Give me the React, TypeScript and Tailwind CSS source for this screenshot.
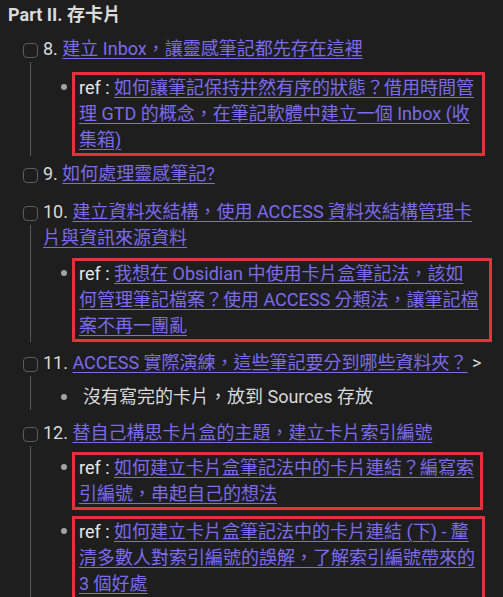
import React from "react";

type Task = {
  num: string;
  link: React.ReactNode;
  tail?: string;
  mt: string;
  childMt?: string;
  children?: React.ReactNode;
};

function Link({ children }: { children: React.ReactNode }) {
  return <a className="text-[#7c6bec] underline decoration-1 underline-offset-[3px] cursor-pointer">{children}</a>;
}

function RefBox({ width, mt, children }: { width: string; mt?: string; children: React.ReactNode }) {
  return (
    <div className={`flex ${mt ?? ""}`}>
      <span className="mt-[12px] h-[6px] w-[6px] flex-none rounded-full bg-[#a3a3a3]" />
      <div className={`ml-[5px] border-[3px] border-[#e5313b] pl-[4px] whitespace-nowrap ${width}`}>
        <span className="text-[#e8e8e8]">ref : </span>
        <Link>{children}</Link>
      </div>
    </div>
  );
}

function TaskItem({ num, link, tail, mt, childMt, children }: Task) {
  const hasKids = children !== undefined;
  return (
    <div className={`grid grid-cols-[15px_1fr] gap-x-[5px] ${mt}`}>
      {/* checkbox + guide line */}
      <div className="flex flex-col items-center">
        <div className="mt-[7px] h-[15px] w-[15px] shrink-0 rounded-[4px] border border-[#5c5c5c]" />
        {hasKids ? <div className="mt-[4px] w-[1px] grow bg-[#585858]" /> : null}
      </div>
      <div>
        <div className="whitespace-nowrap">
          {num} <Link>{link}</Link>
          {tail}
        </div>
        {hasKids ? <div className={`pl-[18px] ${childMt ?? ""}`}>{children}</div> : null}
      </div>
    </div>
  );
}

export default function App() {
  return (
    <div className="min-h-screen bg-[#1e1e1e] text-[18px] leading-[26px] text-[#dadada] font-['Roboto','Noto_Sans_CJK_TC',sans-serif]">
      <h1 className="pl-[8px] text-[18px] font-bold leading-[30px] text-[#dadada]">Part II. 存卡片</h1>

      <div className="pl-[23px]">
        <TaskItem num="8." link="建立 Inbox，讓靈感筆記都先存在這裡" mt="mt-[6px]" childMt="mt-[10px]">
          <RefBox width="w-[413px]">
            如何讓筆記保持井然有序的狀態？借用時間管
            <br />
            理 GTD 的概念，在筆記軟體中建立一個 Inbox (收
            <br />
            集箱)
          </RefBox>
        </TaskItem>

        <TaskItem num="9." link="如何處理靈感筆記?" mt="mt-[5px]" />

        <TaskItem
          num="10."
          link={
            <>
              建立資料夾結構，使用 ACCESS 資料夾結構管理卡
              <br />
              片與資訊來源資料
            </>
          }
          mt="mt-[12px]"
          childMt="mt-[7px]"
        >
          <RefBox width="w-[420px]">
            我想在 Obsidian 中使用卡片盒筆記法，該如
            <br />
            何管理筆記檔案？使用 ACCESS 分類法，讓筆記檔
            <br />
            案不再一團亂
          </RefBox>
        </TaskItem>

        <TaskItem
          num="11."
          link="ACCESS 實際演練，這些筆記要分到哪些資料夾？"
          tail=" >"
          mt="mt-[8px]"
          childMt="mt-[8px]"
        >
          <div className="flex">
            <span className="mt-[10px] h-[6px] w-[6px] flex-none rounded-full bg-[#a3a3a3]" />
            <span className="ml-[16px] whitespace-nowrap">沒有寫完的卡片，放到 Sources 存放</span>
          </div>
        </TaskItem>

        <TaskItem num="12." link="替自己構思卡片盒的主題，建立卡片索引編號" mt="mt-[10px]" childMt="mt-[6px]">
          <RefBox width="w-[411px]">
            如何建立卡片盒筆記法中的卡片連結？編寫索
            <br />
            引編號，串起自己的想法
          </RefBox>
          <RefBox width="w-[413px]" mt="mt-[6px]">
            如何建立卡片盒筆記法中的卡片連結 (下) - 釐
            <br />
            清多數人對索引編號的誤解，了解索引編號帶來的
            <br />
            3 個好處
          </RefBox>
        </TaskItem>
      </div>
    </div>
  );
}
